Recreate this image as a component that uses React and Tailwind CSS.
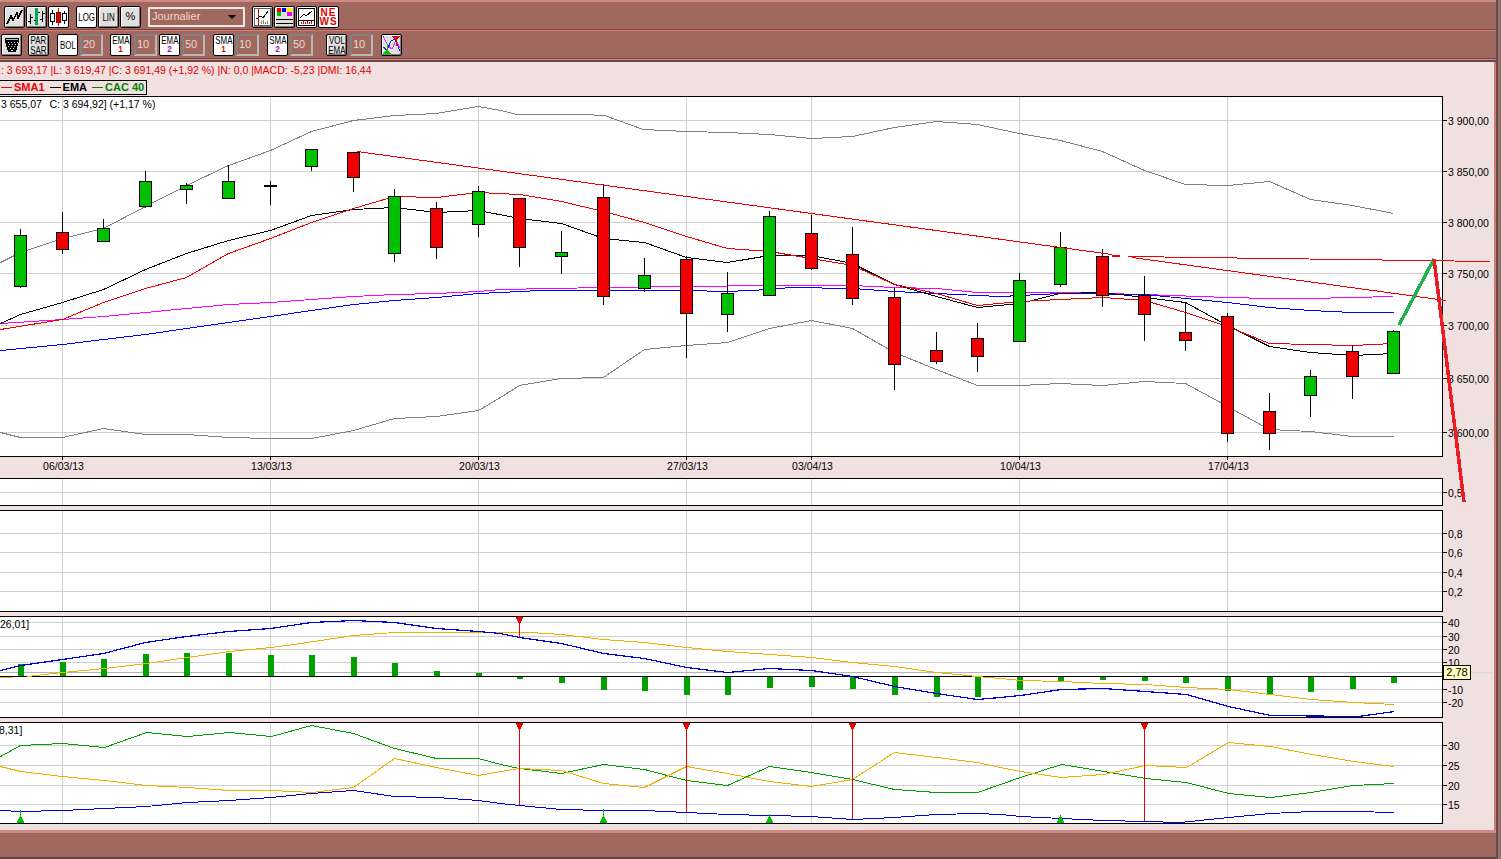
import React from 'react';

const CANDLE_X = [20, 62, 103, 145, 186, 228, 270, 311, 353, 394, 436, 478, 519, 561, 603, 644, 686, 727, 769, 811, 852, 894, 936, 977, 1019, 1060, 1102, 1144, 1185, 1227, 1269, 1310, 1352, 1393];
const V_GRID = [62, 270, 478, 686, 811, 1019, 1227];

// high, low, body top, body bottom, colour
const CANDLES = [
  [229, 288, 235, 286, 'g'], [212, 254, 232, 249, 'r'], [219, 242, 228, 241, 'g'], [171, 208, 181, 206, 'g'],
  [183, 204, 185, 189, 'g'], [165, 198, 181, 198, 'g'], [181, 205, 185, 185, 'k'], [149, 171, 149, 166, 'g'],
  [152, 192, 152, 177, 'r'], [189, 262, 196, 253, 'g'], [202, 259, 208, 247, 'r'], [186, 237, 191, 224, 'g'],
  [198, 267, 198, 247, 'r'], [231, 274, 252, 256, 'g'], [184, 305, 197, 296, 'r'], [258, 292, 275, 288, 'g'],
  [256, 358, 259, 313, 'r'], [272, 332, 293, 314, 'g'], [211, 295, 216, 295, 'g'], [215, 270, 233, 268, 'r'],
  [227, 305, 254, 298, 'r'], [288, 390, 297, 364, 'r'], [332, 364, 350, 361, 'r'], [323, 372, 338, 356, 'r'],
  [273, 341, 280, 341, 'g'], [232, 287, 247, 284, 'g'], [249, 307, 256, 295, 'r'], [276, 341, 295, 314, 'r'],
  [302, 351, 332, 340, 'r'], [313, 442, 316, 433, 'r'], [393, 450, 411, 433, 'r'], [370, 417, 376, 395, 'g'],
  [345, 399, 351, 376, 'r'], [330, 373, 331, 373, 'g'],
];

const BOLL_UP = '0,262 20,252 62,238 103,228 145,206 186,185 228,165 270,150 311,131 353,120 394,115 436,113 478,106 500,110 517,114 582,114 604,115 643,129 686,131 727,132 769,134 811,138 852,136 894,127 936,121 977,124 1000,129 1019,133 1060,140 1102,151 1144,170 1185,184 1227,185 1269,181 1310,199 1352,205 1393,213';
const BOLL_DOWN = '0,432 20,437 62,437 103,428 145,434 186,434 228,437 270,438 311,438 353,430 394,418 436,416 478,410 500,397 519,385 561,378 603,377 644,349 686,345 727,342 769,328 811,320 852,328 894,352 936,369 977,385 1019,385 1060,383 1102,385 1144,381 1185,383 1220,402 1227,406 1269,429 1310,431 1352,436 1393,436';
const EMA = '0,323 20,314 62,302 103,289 145,269 186,253 228,240 270,230 311,215 353,209 394,207 436,212 478,210 519,218 561,223 603,238 644,242 686,257 727,262 769,255 811,255 852,263 894,284 936,296 977,307 1019,303 1060,293 1102,292 1144,297 1185,302 1227,325 1269,346 1310,352 1352,355 1393,353';
const SMA = '0,329 62,319 103,302 145,288 186,277 228,253 270,238 311,222 353,208 394,196 436,197 478,192 519,194 561,201 603,211 644,222 686,236 727,248 769,251 811,258 852,265 894,284 936,293 977,305 1019,301 1060,299 1102,297 1144,300 1185,312 1227,326 1269,343 1310,344 1352,345 1393,343';
const MAGENTA = '0,323 62,319 103,316 145,312 186,308 228,304 270,302 311,299 353,296 394,294 436,293 478,291 500,289 603,287 686,286 769,285 852,285 894,287 936,288 977,292 1060,292 1144,294 1227,297 1269,298 1310,298 1352,297 1393,296';
const BLUE = '0,350 62,344 103,339 145,334 186,328 228,322 270,316 311,310 353,304 394,300 436,297 478,293 500,292 540,290 686,290 727,291 769,289 790,287 852,288 894,291 936,293 977,295 1000,296 1060,293 1144,294 1227,302 1269,307 1310,310 1352,312 1393,312';

const MACD_BARS = [664, 662, 659, 654, 653, 653, 655, 655, 657, 663, 671, 673, 679, 683, 690, 691, 695, 695, 688, 687, 689, 695, 697, 697, 690, 681, 680, 681, 683, 691, 694, 692, 689, 683];
const MACD_BLUE = '0,670 20,665 62,659 103,653 145,642 186,636 228,631 270,628 311,622 353,620 394,622 436,628 478,631 500,633 519,637 561,643 603,653 644,658 686,667 727,672 769,668 811,670 852,676 894,686 936,693 977,699 1000,697 1020,695 1061,689 1103,688 1145,691 1186,694 1228,706 1270,715 1358,716 1394,711';
const MACD_ORANGE = '27,676 62,672 104,668 146,663 187,657 229,651 271,647 300,643 353,635 394,632 436,632 530,632 561,634 603,639 644,642 686,647 727,651 769,654 811,657 852,662 894,666 936,672 977,676 1000,678 1020,680 1061,681 1103,683 1145,684 1186,687 1228,689 1270,694 1311,699 1353,702 1394,704';

const DMI_GREEN = '0,756 20,745 62,743 104,747 146,732 187,736 229,732 271,736 311,725 353,733 394,748 436,758 478,758 500,764 519,768 561,773 603,764 644,769 686,780 727,785 769,766 811,772 852,779 894,789 936,792 977,792 1000,784 1020,777 1061,764 1103,771 1145,778 1186,782 1228,793 1270,797 1311,792 1353,785 1394,783';
const DMI_ORANGE = '0,766 20,771 62,776 104,780 146,785 187,787 229,790 271,790 311,792 353,787 394,758 436,767 478,775 500,771 519,768 561,770 603,783 644,787 686,766 727,773 769,781 811,786 852,779 894,752 936,757 977,762 1000,767 1020,771 1061,777 1103,774 1145,765 1186,767 1228,742 1270,746 1311,754 1353,761 1394,766';
const DMI_BLUE = '0,810 20,811 62,810 104,808 146,806 187,802 229,800 271,797 311,793 353,790 394,796 436,797 478,800 500,803 519,805 561,809 603,810 644,810 686,812 727,814 769,815 811,816 852,819 894,817 936,814 977,813 1000,814 1020,816 1061,818 1103,820 1145,821 1180,822 1228,817 1270,813 1311,811 1353,811 1394,812';

// half pixel shift keeps flat runs on a whole pixel row
const Line = ({ points, color, w = 1 }) => (
  <polyline points={points} fill="none" stroke={color} strokeWidth={w} shapeRendering="crispEdges" transform="translate(0.5 0.5)" />
);

const Grid = ({ top, bottom, ys }) => (
  <g stroke="#d0d0d0" shapeRendering="crispEdges">
    {ys.map((y) => <line key={y} x1="0" x2="1442" y1={y + 0.5} y2={y + 0.5} />)}
    {V_GRID.map((x) => <line key={x} x1={x + 0.5} x2={x + 0.5} y1={top} y2={bottom} />)}
  </g>
);

const Candle = ({ x, c }) => {
  const [high, low, top, bottom, col] = c;
  const cx = x + 0.5;
  return (
    <g shapeRendering="crispEdges" stroke="#000">
      <line x1={cx} x2={cx} y1={high} y2={low} />
      {col === 'k'
        ? <rect x={x - 6} y={top} width="13" height="2" fill="#000" stroke="none" />
        : <rect x={x - 5.5} y={top + 0.5} width="12" height={bottom - top} fill={col === 'g' ? '#00c000' : '#f00000'} />}
    </g>
  );
};

const SellMark = ({ x, y0, y1 }) => (
  <g shapeRendering="crispEdges">
    <line x1={x + 0.5} x2={x + 0.5} y1={y0} y2={y1} stroke="#f00000" />
    <polygon points={`${x - 3},${y0} ${x + 4},${y0} ${x + 4},${y0 + 2} ${x + 3},${y0 + 2} ${x + 3},${y0 + 4} ${x + 2},${y0 + 4} ${x + 2},${y0 + 6} ${x - 1},${y0 + 6} ${x - 1},${y0 + 4} ${x - 2},${y0 + 4} ${x - 2},${y0 + 2} ${x - 3},${y0 + 2}`} fill="#f00000" />
  </g>
);

const BuyMark = ({ x, y }) => (
  <g shapeRendering="crispEdges">
    <line x1={x + 0.5} x2={x + 0.5} y1={y} y2="823" stroke="#00c000" />
    <polygon points={`${x - 3},823 ${x + 4},823 ${x + 4},821 ${x + 3},821 ${x + 3},819 ${x + 2},819 ${x + 2},817 ${x - 1},817 ${x - 1},819 ${x - 2},819 ${x - 2},821 ${x - 3},821`} fill="#00c000" />
  </g>
);

// axis ticks and values at the right of a panel, in page coordinates
const Axis = ({ top, height, labels, children }) => (
  <div className="relative w-[51px] shrink-0">
    <svg width="51" height={height} viewBox={`0 ${top} 51 ${height}`} className="block overflow-visible">
      {labels.map(([y, text]) => (
        <g key={text}>
          <line x1="0" x2="4" y1={y + 0.5} y2={y + 0.5} stroke="#000" shapeRendering="crispEdges" />
          <text x="5" y={y + 4.5} fill="#000">{text}</text>
        </g>
      ))}
    </svg>
    {children}
  </div>
);

const Panel = ({ top, height, h, gridYs, labels, extra, children }) => (
  <div className={`flex shrink-0 ${h}`}>
    <div className="w-[1443px] shrink-0 border-y border-r border-black bg-white overflow-hidden">
      <svg width="1442" height={height - 2} viewBox={`0 ${top + 1} 1442 ${height - 2}`} className="block">
        <Grid top={top} bottom={top + height} ys={gridYs} />
        {children}
      </svg>
    </div>
    <Axis top={top} height={height} labels={labels}>{extra}</Axis>
  </div>
);

const Btn = ({ white, className = '', children }) => (
  <div className={`w-[21px] h-[22px] shrink-0 flex items-center justify-center rounded-[2px] border border-black overflow-hidden text-black ${white ? 'bg-white' : 'bg-[#e0e0e0] shadow-[inset_1px_1px_0_#fff,inset_-1px_-1px_0_#808080]'} ${className}`}>
    {children}
  </div>
);

const Narrow = ({ children }) => (
  <span className="block scale-x-[0.72] text-[11px] leading-[10px] text-center whitespace-nowrap">{children}</span>
);

const Field = ({ className = '', children }) => (
  <div className={`w-[23px] h-[22px] shrink-0 pl-px flex items-center border-2 border-t-[#808080] border-l-[#808080] border-r-[#b8b8b8] border-b-[#b8b8b8] text-[11px] text-[#ecd6cf] ${className}`}>
    {children}
  </div>
);

const MaBtn = ({ label, n, className }) => (
  <Btn white className={className}>
    <span className="flex flex-col items-center">
      <Narrow>{label}</Narrow>
      <span className={`text-[9px] leading-[9px] font-bold scale-x-90 ${n === 1 ? 'text-[#e00000]' : 'text-[#a000c0]'}`}>{n}</span>
    </span>
  </Btn>
);

const ZigzagIcon = () => (
  <svg width="18" height="18" viewBox="0 0 18 18" shapeRendering="crispEdges">
    <polyline points="1,16 5,8 7,12 11,5 12,10 16,2" fill="none" stroke="#000" strokeWidth="1.5" />
  </svg>
);

const BarsIcon = () => (
  <svg width="19" height="20" viewBox="0 0 19 20" shapeRendering="crispEdges">
    <path d="M3.5 7v10M1 14h2M4 10h2M15.5 4v11M13 12h2M16 6h2" stroke="#000" fill="none" />
    <path d="M9.5 1v17" stroke="#00a850" strokeWidth="3" fill="none" />
    <path d="M7 13h2M11 5h2" stroke="#000" fill="none" />
  </svg>
);

const CandlesIcon = () => (
  <svg width="19" height="20" viewBox="0 0 19 20" shapeRendering="crispEdges">
    <path d="M3.5 3v15M15.5 4v13" stroke="#000" />
    <path d="M9.5 1v18" stroke="#e00000" />
    <rect x="1.5" y="6.5" width="4" height="8" fill="#fff" stroke="#000" />
    <rect x="13.5" y="6.5" width="4" height="7" fill="#fff" stroke="#000" />
    <rect x="7.5" y="5.5" width="4" height="10" fill="#e00000" stroke="#800000" />
  </svg>
);

const TrashIcon = () => (
  <svg width="16" height="16" viewBox="0 0 16 16" shapeRendering="crispEdges">
    <polygon points="1,1 15,1 15,4 12,15 4,15 1,4" fill="#000" />
    <path d="M2 2.5h12" stroke="#c0c0c0" />
    <path d="M4 5h1M7 5h1M10 5h1M13 5h1M5 7h1M8 7h1M11 7h1M4 9h1M7 9h1M10 9h1M6 11h1M9 11h1M7 13h2" stroke="#e8e8e8" />
  </svg>
);

const ChartRedIcon = () => (
  <svg width="17" height="18" viewBox="0 0 17 18" shapeRendering="crispEdges">
    <rect x="0.5" y="0.5" width="16" height="17" fill="#fff" stroke="#606060" />
    <path d="M4.5 1v16" stroke="#e00000" strokeWidth="1.5" />
    <polyline points="2,11 7,8 9,10 14,3" fill="none" stroke="#000" />
    <path d="M7.5 16v-3M9.5 16v-4M11.5 16v-2M13.5 16v-3" stroke="#808080" />
  </svg>
);

const PaletteIcon = () => (
  <svg width="17" height="18" viewBox="0 0 17 18" shapeRendering="crispEdges">
    <rect x="1" y="0" width="4" height="4" fill="#f00000" />
    <rect x="6" y="0" width="4" height="4" fill="#0000e0" />
    <rect x="11" y="0" width="5" height="4" fill="#f0f000" />
    <rect x="1" y="4" width="4" height="4" fill="#00c000" />
    <rect x="6" y="4" width="4" height="4" fill="#e0e0e0" />
    <rect x="11" y="4" width="5" height="4" fill="#f000f0" />
    <path d="M0 11.5h17M0 15.5h17" stroke="#000" />
  </svg>
);

const ChartBarsIcon = () => (
  <svg width="17" height="18" viewBox="0 0 17 18" shapeRendering="crispEdges">
    <rect x="0.5" y="0.5" width="16" height="17" fill="#fff" stroke="#000" />
    <polyline points="2,10 6,6 8,8 14,3" fill="none" stroke="#000" />
    <path d="M1 12.5h15" stroke="#000" />
    <path d="M3.5 16v-2M5.5 16v-3M7.5 16v-2M9.5 16v-3M11.5 16v-2M13.5 16v-3" stroke="#e00000" />
  </svg>
);

const CrossIcon = () => (
  <svg width="19" height="20" viewBox="0 0 19 20" shapeRendering="crispEdges">
    <polyline points="1,1 6,11 10,14 14,5 18,13" fill="none" stroke="#e040e0" />
    <polyline points="1,12 5,15 9,6 13,4 18,16" fill="none" stroke="#2020e0" />
    <polygon points="10,1 18,1 15,5 13,5" fill="#e00000" />
    <path d="M14.5 5v6" stroke="#e00000" />
    <polygon points="1,19 9,19 6,15 4,15" fill="#00c000" />
    <path d="M5.5 9v6" stroke="#00c000" />
  </svg>
);

const Legend = ({ color, text, className = '' }) => (
  <span className={`flex items-center whitespace-nowrap ${color} ${className}`}>
    <span className="w-[11px] h-px bg-current mr-[2px]" />
    <span>{text}</span>
  </span>
);

const MAIN_LABELS = [[120, '3 900,00'], [171, '3 850,00'], [222, '3 800,00'], [273, '3 750,00'], [325, '3 700,00'], [378, '3 650,00'], [432, '3 600,00']];
const DATES = [[62, '06/03/13'], [270, '13/03/13'], [478, '20/03/13'], [686, '27/03/13'], [811, '03/04/13'], [1019, '10/04/13'], [1227, '17/04/13']];

export default function App() {
  return (
    <div className="relative w-[1501px] h-[859px] flex overflow-hidden font-['Liberation_Sans',Arial,sans-serif] text-[10.5px] bg-[#a16860]">
      <div className="w-[1496px] shrink-0 flex flex-col">
        {/* toolbars */}
        <div className="h-[30px] flex items-center pl-[4px] pt-[2px] border-t-2 border-[#d08c84] border-b border-b-[#6e4a46] bg-[#a16860]">
          <Btn><ZigzagIcon /></Btn>
          <Btn className="ml-px"><BarsIcon /></Btn>
          <Btn white className="ml-px"><CandlesIcon /></Btn>
          <Btn white className="ml-[7px]"><Narrow>LOG</Narrow></Btn>
          <Btn className="ml-px"><Narrow>LIN</Narrow></Btn>
          <Btn className="ml-px"><span className="text-[11px]">%</span></Btn>
          <div className="ml-[7px] w-[97px] h-[20px] flex items-center justify-between pl-[2px] pr-[7px] rounded-[1px] border-2 border-[#f2e8e4] text-[11px] text-[#ecd6cf]">
            <span>Journalier</span>
            <span className="w-0 h-0 border-x-[4px] border-x-transparent border-t-[4px] border-t-black" />
          </div>
          <Btn className="ml-[7px]"><ChartRedIcon /></Btn>
          <Btn className="ml-px"><PaletteIcon /></Btn>
          <Btn white className="ml-px"><ChartBarsIcon /></Btn>
          <Btn white className="ml-px">
            <span className="flex flex-col items-center text-[#e00000] text-[10px] leading-[9px] font-bold tracking-[1px]">
              <span>NE</span>
              <span>WS</span>
            </span>
          </Btn>
        </div>
        <div className="h-[29px] flex items-center pl-px border-t border-[#e07870] border-b border-b-[#6e4a46] bg-[#a16860]">
          <Btn><TrashIcon /></Btn>
          <Btn className="ml-[6px]"><Narrow>PAR<br />SAR</Narrow></Btn>
          <Btn white className="ml-[8px]"><Narrow>BOL</Narrow></Btn>
          <Field className="ml-[2px]">20</Field>
          <MaBtn label="EMA" n={1} className="ml-[7px]" />
          <Field className="ml-[3px]">10</Field>
          <MaBtn label="EMA" n={2} className="ml-[2px]" />
          <Field className="ml-[2px]">50</Field>
          <MaBtn label="SMA" n={1} className="ml-[8px]" />
          <Field className="ml-[2px]">10</Field>
          <MaBtn label="SMA" n={2} className="ml-[8px]" />
          <Field className="ml-[2px]">50</Field>
          <Btn className="ml-[13px]"><Narrow>VOL<br />EMA</Narrow></Btn>
          <Field className="ml-[3px]">10</Field>
          <Btn className="ml-[8px]"><CrossIcon /></Btn>
        </div>
        <div className="h-px bg-[#d08c84]" />
        <div className="h-[2px] bg-[#704442]" />

        {/* charts */}
        <div className="h-[768px] flex flex-col bg-[#f0e0e0] border-r-2 border-[#d07c72]">
          <div className="h-[18px] flex items-center pl-px text-[#e00000] whitespace-pre">: 3 693,17 |L: 3 619,47 |C: 3 691,49 (+1,92 %) |N: 0,0 |MACD: -5,23 |DMI: 16,44</div>
          <div className="h-[15px] w-[147px] flex items-center pl-px border-y border-r border-black text-[11px] font-bold">
            <Legend color="text-[#f00000]" text="SMA1" />
            <Legend color="text-black" text="EMA" className="ml-[5px]" />
            <Legend color="text-[#008000]" text="CAC 40" className="ml-[5px]" />
          </div>
          <div className="h-px" />

          <Panel top={96} height={361} h="h-[361px]" gridYs={[120, 171, 222, 273, 325, 378, 432]} labels={MAIN_LABELS}>
            <Line points={BOLL_UP} color="#808080" />
            <Line points={BOLL_DOWN} color="#808080" />
            <Line points={MAGENTA} color="#ff00ff" />
            <Line points={BLUE} color="#0000ff" />
            <Line points={EMA} color="#000000" />
            <Line points={SMA} color="#f00000" />
            {CANDLES.map((c, i) => <Candle key={CANDLE_X[i]} x={CANDLE_X[i]} c={c} />)}
            <text x="1" y="108" fill="#000">3 655,07</text>
            <text x="49.5" y="108" fill="#000">C: 3 694,92] (+1,17 %)</text>
          </Panel>

          <svg width="1443" height="21" viewBox="0 457 1443 21" className="block shrink-0">
            {DATES.map(([x, text]) => (
              <g key={text}>
                <line x1={x + 0.5} x2={x + 0.5} y1="457" y2="460" stroke="#000" shapeRendering="crispEdges" />
                <text x={x + 1.5} y="470" textAnchor="middle" fill="#000">{text}</text>
              </g>
            ))}
          </svg>

          <Panel top={478} height={28} h="h-[28px]" gridYs={[492]} labels={[[492, '0,5']]} />
          <div className="h-[4px] shrink-0" />
          <Panel top={510} height={102} h="h-[102px]" gridYs={[533, 552, 572, 591]} labels={[[533, '0,8'], [552, '0,6'], [572, '0,4'], [591, '0,2']]} />
          <div className="h-[4px] shrink-0" />

          <Panel
            top={616}
            height={102}
            h="h-[102px]"
            gridYs={[622, 636, 649, 662, 689, 702]}
            labels={[[622, '40'], [636, '30'], [649, '20'], [662, '10'], [689, '-10'], [702, '-20']]}
            extra={
              <>
                <div className="absolute left-[28px] top-[56px] w-[22px] h-px bg-[#d4dcdc]" />
                <div className="absolute left-0 top-[49px] w-[28px] h-[15px] flex items-center justify-center border border-black bg-[#ffffc0] text-[11px]">2,78</div>
              </>
            }
          >
            <line x1="0" x2="1442" y1="672.5" y2="672.5" stroke="#b4b4b4" shapeRendering="crispEdges" />
            {MACD_BARS.map((y, i) => (
              <rect key={CANDLE_X[i]} x={CANDLE_X[i] - 2} y={Math.min(y, 676)} width="6" height={Math.abs(y - 676)} fill="#00a000" shapeRendering="crispEdges" />
            ))}
            <line x1="0" x2="1442" y1="676.5" y2="676.5" stroke="#000" shapeRendering="crispEdges" />
            <Line points={MACD_ORANGE} color="#f0b000" />
            <Line points={MACD_BLUE} color="#0000d8" w={1.2} />
            <line x1="0" x2="13" y1="677.5" y2="677.5" stroke="#f0b000" shapeRendering="crispEdges" />
            <SellMark x={519} y0={617} y1={637} />
            <text x="0" y="628" fill="#000">26,01]</text>
          </Panel>
          <div className="h-[4px] shrink-0" />

          <Panel top={722} height={102} h="h-[102px]" gridYs={[745, 765, 785, 804]} labels={[[745, '30'], [765, '25'], [785, '20'], [804, '15']]}>
            <Line points={DMI_GREEN} color="#00a000" />
            <Line points={DMI_ORANGE} color="#f0b000" />
            <Line points={DMI_BLUE} color="#0000d8" />
            <SellMark x={519} y0={723} y1={805} />
            <SellMark x={686} y0={723} y1={812} />
            <SellMark x={852} y0={723} y1={819} />
            <SellMark x={1144} y0={723} y1={821} />
            <BuyMark x={20} y={810} />
            <BuyMark x={603} y={809} />
            <BuyMark x={769} y={814} />
            <BuyMark x={1060} y={815} />
            <text x="-1" y="734" fill="#000">8,31]</text>
          </Panel>
        </div>

        {/* bottom bar */}
        <div className="h-[29px] border-t-[3px] border-[#d08c84] border-b-2 border-b-[#5c4440] bg-[#a16860]" />
      </div>

      <div className="flex-1 flex">
        <div className="w-[2px] bg-[#6e4a46]" />
        <div className="flex-1 bg-[#8c7470]" />
      </div>

      {/* lines drawn over the chart by hand */}
      <svg width="1501" height="859" viewBox="0 0 1501 859" className="absolute left-0 top-0 pointer-events-none">
        <g fill="none" shapeRendering="crispEdges">
          <line x1="357" y1="151.5" x2="1112" y2="254.5" stroke="#f00000" />
          <line x1="1112" y1="255.5" x2="1120" y2="255.5" stroke="#f00000" strokeWidth="2" />
          <line x1="1132" y1="257.5" x2="1446" y2="300.5" stroke="#f00000" />
          <line x1="1128" y1="256.5" x2="1490" y2="261.5" stroke="#f00000" />
          <line x1="1399" y1="325" x2="1434" y2="259" stroke="#22b14c" strokeWidth="3.5" />
          <line x1="1434" y1="259" x2="1464" y2="502" stroke="#ed1c24" strokeWidth="3.5" />
        </g>
      </svg>
    </div>
  );
}
